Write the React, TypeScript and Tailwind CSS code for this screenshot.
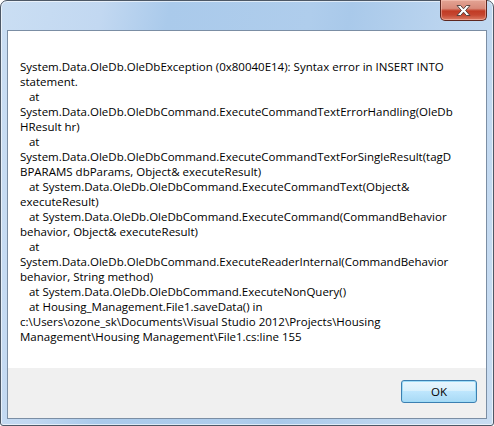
import React from "react";

const lines: string[] = [
  "System.Data.OleDb.OleDbException (0x80040E14): Syntax error in INSERT INTO",
  "statement.",
  "   at",
  "System.Data.OleDb.OleDbCommand.ExecuteCommandTextErrorHandling(OleDb",
  "HResult hr)",
  "   at",
  "System.Data.OleDb.OleDbCommand.ExecuteCommandTextForSingleResult(tagD",
  "BPARAMS dbParams, Object& executeResult)",
  "   at System.Data.OleDb.OleDbCommand.ExecuteCommandText(Object&",
  "executeResult)",
  "   at System.Data.OleDb.OleDbCommand.ExecuteCommand(CommandBehavior",
  "behavior, Object& executeResult)",
  "   at",
  "System.Data.OleDb.OleDbCommand.ExecuteReaderInternal(CommandBehavior",
  "behavior, String method)",
  "   at System.Data.OleDb.OleDbCommand.ExecuteNonQuery()",
  "   at Housing_Management.File1.saveData() in",
  "c:\\Users\\ozone_sk\\Documents\\Visual Studio 2012\\Projects\\Housing",
  "Management\\Housing Management\\File1.cs:line 155",
];

export default function App() {
  return (
    <div className="w-[494px] h-[426px] bg-white">
      <div className="w-[494px] h-[426px] rounded-t-[7px] rounded-b-[3px] border border-[#4d5866] bg-[linear-gradient(100deg,#cadef3_0%,#c2d8f1_18%,#aacaeb_30%,#afcdec_55%,#a9c9ea_62%,#bcd5ef_80%,#c9ddf2_100%)] flex flex-col shadow-[inset_0_0_0_1px_rgba(255,255,255,0.6)]">
        {/* title bar */}
        <div className="h-[29px] flex justify-end pr-[6px] shrink-0">
          <div className="w-[47px] h-[21px] -mt-px rounded-b-[5px] border border-[#5d2720] border-t-0 bg-[linear-gradient(180deg,#e3a494_0%,#d88a7a_42%,#c13b24_55%,#c54630_75%,#dc7c64_100%)] shadow-[inset_0_0_0_1px_rgba(255,210,200,0.45)] flex items-center justify-center">
            <svg width="17" height="13" viewBox="0 0 17 13">
              <path
                d="M2 1.5h3.6L8.5 4.8l2.9-3.3H15l-4.4 5 4.4 5h-3.6L8.5 8.2l-2.9 3.3H2l4.4-5z"
                fill="#ffffff"
                stroke="#4a3a38"
                strokeWidth="0.9"
                strokeLinejoin="round"
              />
            </svg>
          </div>
        </div>
        {/* client area */}
        <div className="mx-[6px] flex-1 border border-[#7b8ea4] flex flex-col bg-white">
          <div className="flex-1 bg-white pl-[12px] pt-[28px] font-['Open_Sans','Noto_Sans',sans-serif] text-[11.5px] leading-[15px] text-black">
            {lines.map((l, i) => (
              <div key={i} className="whitespace-pre">
                {l}
              </div>
            ))}
          </div>
          <div className="h-[50px] bg-[#f0f0f0] flex justify-end items-start pt-[12px] pr-[9px] shrink-0">
            <button className="w-[76px] h-[23px] rounded-[3px] border border-[#3c7fb1] bg-[linear-gradient(180deg,#eaf6fd_0%,#d9f0fc_45%,#bee6fd_50%,#a7d9f5_100%)] shadow-[inset_0_0_0_1px_#9fdcf7] font-['Open_Sans','Noto_Sans',sans-serif] text-[11.5px] text-black flex items-center justify-center">
              OK
            </button>
          </div>
        </div>
        <div className="h-[6px] shrink-0" />
      </div>
    </div>
  );
}
